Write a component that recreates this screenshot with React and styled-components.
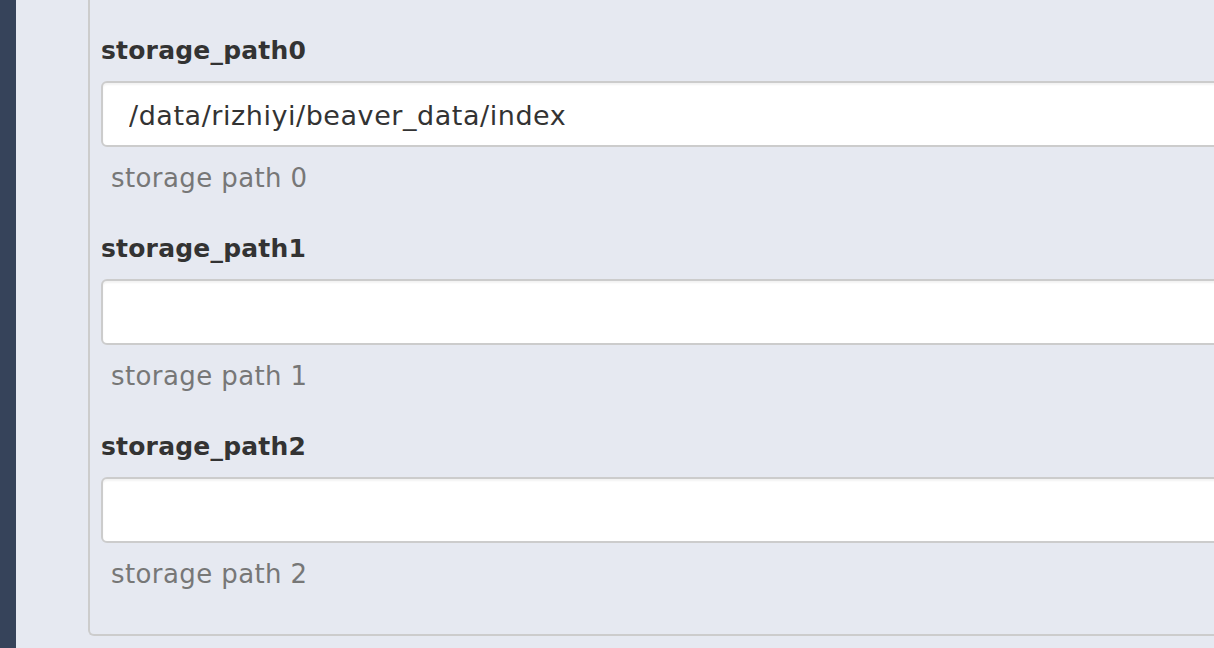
import React from "react";
import styled, { createGlobalStyle } from "styled-components";

const Global = createGlobalStyle`
  html, body { margin: 0; padding: 0; background: #e6e9f1; }
  body { font-family: "DejaVu Sans", "Open Sans", sans-serif; }
`;

const Page = styled.div`
  display: flex;
  width: 1214px;
  height: 648px;
  overflow: hidden;
  background: #e6e9f1;
`;

const Sidebar = styled.div`
  flex: 0 0 16px;
  background: #36435a;
`;

const Main = styled.div`
  flex: 1;
  min-width: 0;
  padding-left: 72px;
`;

const Fieldset = styled.div`
  width: 1300px;
  border: 2px solid #cccccc;
  border-top: none;
  border-right: none;
  border-bottom-left-radius: 6px;
  padding: 35px 0 5px 11px;
`;

const Group = styled.div`
  display: flex;
  flex-direction: column;
  margin-bottom: 40px;
`;

const Label = styled.label`
  font-size: 25px;
  font-weight: bold;
  letter-spacing: 0.2px;
  line-height: 30px;
  padding-top: 1px;
  color: #333;
  margin-bottom: 15px;
`;

const Input = styled.input`
  box-sizing: border-box;
  height: 66px;
  width: 100%;
  border: 2px solid #cccccc;
  border-radius: 6px;
  background: #fff;
  box-shadow: inset 0 2px 2px rgba(0, 0, 0, 0.05);
  padding: 3px 26px 0;
  font-family: inherit;
  font-size: 27px;
  letter-spacing: 0.55px;
  color: #333;
  outline: none;
`;

const Help = styled.div`
  margin-top: 16px;
  padding-left: 10px;
  font-size: 26px;
  letter-spacing: 0.4px;
  line-height: 30px;
  color: #777;
`;

const fields = [
  { name: "storage_path0", value: "/data/rizhiyi/beaver_data/index", help: "storage path 0" },
  { name: "storage_path1", value: "", help: "storage path 1" },
  { name: "storage_path2", value: "", help: "storage path 2" },
];

export default function App() {
  return (
    <>
      <Global />
      <Page>
        <Sidebar />
        <Main>
          <Fieldset>
            {fields.map((f) => (
              <Group key={f.name}>
                <Label>{f.name}</Label>
                <Input defaultValue={f.value} />
                <Help>{f.help}</Help>
              </Group>
            ))}
          </Fieldset>
        </Main>
      </Page>
    </>
  );
}
